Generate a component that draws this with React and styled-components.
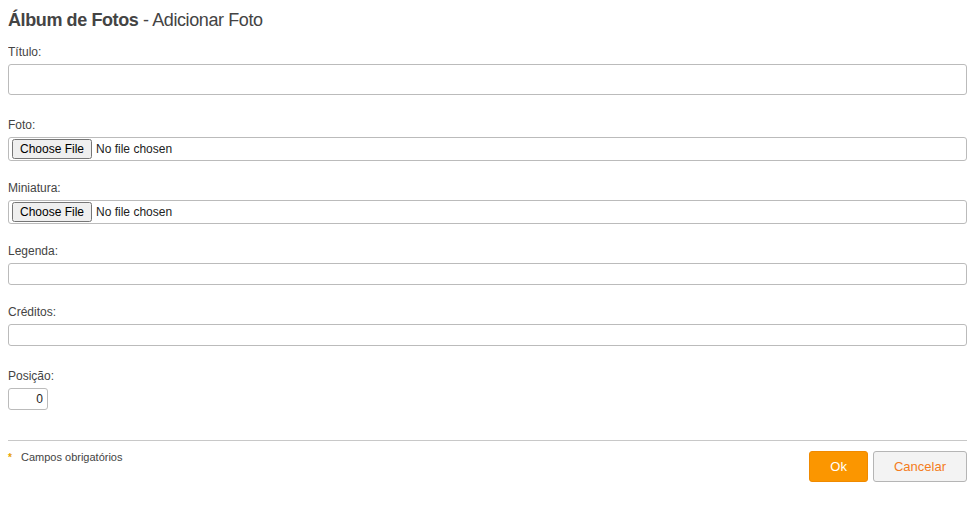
import styled, { createGlobalStyle } from 'styled-components';

const GlobalStyle = createGlobalStyle`
  body {
    margin: 8px;
    font-family: "Liberation Sans", Arial, sans-serif;
    color: #444;
    background: #fff;
  }
`;

export default function App() {
  return (
    <>
      <GlobalStyle />
      <Title>
        <strong>Álbum de Fotos</strong> - Adicionar Foto
      </Title>
      <Form onSubmit={(e) => e.preventDefault()}>
        <Field gap={23}>
          <Label>Título:</Label>
          <TextInput type='text' tall />
        </Field>
        <Field gap={20}>
          <Label>Foto:</Label>
          <FileInput type='file' />
        </Field>
        <Field gap={20}>
          <Label>Miniatura:</Label>
          <FileInput type='file' />
        </Field>
        <Field gap={20}>
          <Label>Legenda:</Label>
          <TextInput type='text' />
        </Field>
        <Field gap={23}>
          <Label>Créditos:</Label>
          <TextInput type='text' />
        </Field>
        <Field gap={30}>
          <Label>Posição:</Label>
          <NumberInput type='text' defaultValue='0' />
        </Field>
        <Footer>
          <Required>
            <Star>*</Star>
            Campos obrigatórios
          </Required>
          <Actions>
            <Button type='submit' primary>Ok</Button>
            <Button type='button'>Cancelar</Button>
          </Actions>
        </Footer>
      </Form>
    </>
  );
}

const Title = styled.h1`
  margin: 0 0 14px;
  padding-top: 2px;
  font-size: 18px;
  line-height: 21px;
  font-weight: normal;
  letter-spacing: -0.4px;
  color: #444;
  & > strong { font-weight: bold; }
`;

const Form = styled.form`
  display: flex;
  flex-direction: column;
`;

const Field = styled.div`
  display: flex;
  flex-direction: column;
  align-items: flex-start;
  margin-bottom: ${({ gap }) => gap}px;
`;

const Label = styled.label`
  font-size: 12px;
  line-height: 14px;
  margin-bottom: 5px;
  color: #444;
`;

const TextInput = styled.input`
  box-sizing: border-box;
  width: 100%;
  height: ${({ tall }) => (tall ? '31px' : '22px')};
  border: 1px solid #bbb;
  border-radius: 3px;
  padding: 2px 5px;
  font: 12px "Liberation Sans", Arial, sans-serif;
  outline: none;
`;

const FileInput = styled.input`
  box-sizing: border-box;
  width: 100%;
  height: 24px;
  border: 1px solid #bbb;
  border-radius: 3px;
  padding: 1px 3px;
  font: 12px "Liberation Sans", Arial, sans-serif;
  color: #222;
`;

const NumberInput = styled.input`
  box-sizing: border-box;
  width: 40px;
  height: 22px;
  border: 1px solid #bbb;
  border-radius: 3px;
  padding: 2px 4px;
  text-align: right;
  font: 12px "Liberation Sans", Arial, sans-serif;
  color: #222;
  outline: none;
`;

const Footer = styled.div`
  display: flex;
  justify-content: space-between;
  align-items: flex-start;
  border-top: 1px solid #c8c8c8;
  padding-top: 10px;
`;

const Required = styled.div`
  font-size: 11px;
  line-height: 13px;
  color: #444;
`;

const Star = styled.span`
  display: inline-block;
  width: 13px;
  color: #e8a200;
  font-size: 10px;
  font-weight: bold;
`;

const Actions = styled.div`
  display: flex;
  gap: 5px;
`;

const Button = styled.button`
  box-sizing: border-box;
  height: 31px;
  padding: 0 20px;
  border-radius: 3px;
  font: 13px "Liberation Sans", Arial, sans-serif;
  cursor: pointer;
  border: 1px solid ${({ primary }) => (primary ? '#f08a00' : '#b5b5b5')};
  background: ${({ primary }) => (primary ? '#fb9600' : '#f3f3f3')};
  color: ${({ primary }) => (primary ? '#fff' : '#f47c20')};
`;
